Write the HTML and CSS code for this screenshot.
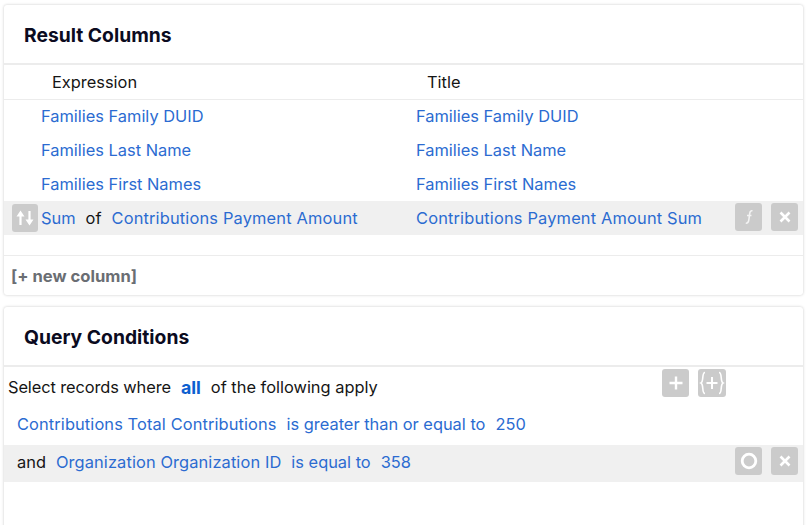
FILE: index.html
```html
<!DOCTYPE html>
<html lang="en">
<head>
<meta charset="utf-8">
<title>Query</title>
<link rel="stylesheet" href="styles.css">
</head>
<body>
<section class="card columns">
  <h2 class="card-title">Result Columns</h2>
  <div class="row head"><span class="cell-expr head-expr">Expression</span><span class="cell-title head-title">Title</span></div>
  <div class="row"><span class="cell-expr"><a>Families Family DUID</a></span><span class="cell-title"><a>Families Family DUID</a></span></div>
  <div class="row"><span class="cell-expr"><a>Families Last Name</a></span><span class="cell-title"><a>Families Last Name</a></span></div>
  <div class="row"><span class="cell-expr"><a>Families First Names</a></span><span class="cell-title"><a>Families First Names</a></span></div>
  <div class="row hl">
    <span class="btn move"><svg width="22" height="18" viewBox="0 0 22 18"><path d="M6.500 16V6M15.500 2v10" fill="none" stroke="#fff" stroke-width="2.200"/><path d="M6.500 1.500 2.500 7.500h8zM15.500 16.500l4-6h-8z" fill="#fff"/></svg></span>
    <span class="cell-expr tight"><a>Sum</a><span class="word">of</span><a class="long">Contributions Payment Amount</a></span>
    <span class="cell-title"><a class="long">Contributions Payment Amount Sum</a></span>
    <span class="actions">
      <span class="btn"><svg width="14" height="18" viewBox="0 0 14 18"><path d="M10.500 2.800C8 2.300 7.800 4 7.300 8.500S6.500 15.500 3.800 15.200M5 7.500h4.500" fill="none" stroke="#f4f4f4" stroke-width="1.600"/></svg></span>
      <span class="btn"><svg width="14" height="14" viewBox="0 0 14 14"><path d="M2.500 2.500l9 9M11.500 2.500l-9 9" stroke="#fff" stroke-width="2.600"/></svg></span>
    </span>
  </div>
  <div class="spacer"></div>
  <div class="footer"><a class="new-col">[+ new column]</a></div>
</section>
<section class="card conditions">
  <h2 class="card-title">Query Conditions</h2>
  <div class="cond intro">
    <span class="lead">Select records where</span><b class="all">all</b><span>of the following apply</span>
    <span class="intro-actions">
      <span class="btn"><svg width="16" height="16" viewBox="0 0 16 16"><path d="M8 1.500v13M1.500 8h13" stroke="#fff" stroke-width="2.400"/></svg></span>
      <span class="btn wide"><svg width="26" height="26" viewBox="0 0 26 26"><path d="M13 7v12M7.500 13h11" stroke="#fff" stroke-width="2"/><path d="M6 2.500C2.500 2.500 5 11.500 2 13 5 14.500 2.500 23.500 6 23.500M20 2.500C23.500 2.500 21 11.500 24 13 21 14.500 23.500 23.500 20 23.500" fill="none" stroke="#fff" stroke-width="1.600"/></svg></span>
    </span>
  </div>
  <div class="cond item"><a class="org">Contributions Total Contributions</a><a>is greater than or equal to</a><a>250</a></div>
  <div class="cond item hl last">
    <span>and</span><a class="org">Organization Organization ID</a><a>is equal to</a><a>358</a>
    <span class="actions">
      <span class="btn"><svg width="18" height="18" viewBox="0 0 18 18"><circle cx="9" cy="9" r="6.800" fill="none" stroke="#fff" stroke-width="2.800"/></svg></span>
      <span class="btn"><svg width="14" height="14" viewBox="0 0 14 14"><path d="M2.500 2.500l9 9M11.500 2.500l-9 9" stroke="#fff" stroke-width="2.600"/></svg></span>
    </span>
  </div>
</section>
</body>
</html>
```
FILE: styles.css
```css
* { box-sizing: border-box; }
html, body { height: 100%; }
body {
  margin: 0;
  padding: 5px 4px 0;
  background: #fff;
  overflow: hidden;
  font-family: "Inter", "Liberation Sans", sans-serif;
  font-size: 16.4px;
  color: #151515;
}
a { color: #2b6bd1; }
.long { letter-spacing: .17px; }
.org { letter-spacing: .11px; }
.lead { letter-spacing: -.1px; }
.card {
  background: #fff;
  border-radius: 3px;
  box-shadow: 0 0 3px rgba(0, 0, 0, .22);
}
.columns { height: 290px; margin-bottom: 12px; }
.conditions { height: 240px; }
.card-title {
  margin: 0;
  height: 60px;
  padding: 1px 0 0 20px;
  display: flex;
  align-items: center;
  font-size: 19.300px;
  font-weight: 700;
  color: #0b0b1f;
  border-bottom: 2px solid #ececec;
}
.row {
  position: relative;
  display: flex;
  align-items: center;
  height: 34px;
}
.head { box-shadow: 0 1px 0 #ececec; }
.cell-expr { width: 412px; padding-left: 37px; flex: none; }
.head-expr { padding-left: 48px; }
.tight { width: 375px; padding-left: 0; }
.cell-title { flex: none; }
.head-title { padding-left: 11px; }
.hl { background: #f0f0f0; }
.word { margin: 0 10px; }
.move { margin: 0 3px 0 8px; }
.btn {
  flex: none;
  width: 27px;
  height: 28px;
  border-radius: 3px;
  background: #cbcbcb;
  display: inline-flex;
  align-items: center;
  justify-content: center;
}
.row .move { width: 26px; }
.wide { width: 28px; }
.actions {
  position: absolute;
  right: 5px;
  top: 2px;
  display: flex;
  gap: 9px;
}
.spacer { height: 21px; border-bottom: 1px solid #ececec; }
.footer { height: 39px; padding-left: 7px; display: flex; align-items: center; }
.new-col { color: #6a6e73; font-weight: 700; font-size: 16.600px; }
.cond {
  position: relative;
  display: flex;
  align-items: center;
  gap: 10px;
  height: 38px;
}
.intro { padding-left: 4px; height: 40px; }
.all { color: #0d5fd0; font-size: 17.800px; }
.intro-actions {
  position: absolute;
  left: 658px;
  top: 2px;
  display: flex;
  gap: 9px;
}
.item { padding: 0 0 5px 13px; }
.last { height: 37px; padding-bottom: 4px; }
```
